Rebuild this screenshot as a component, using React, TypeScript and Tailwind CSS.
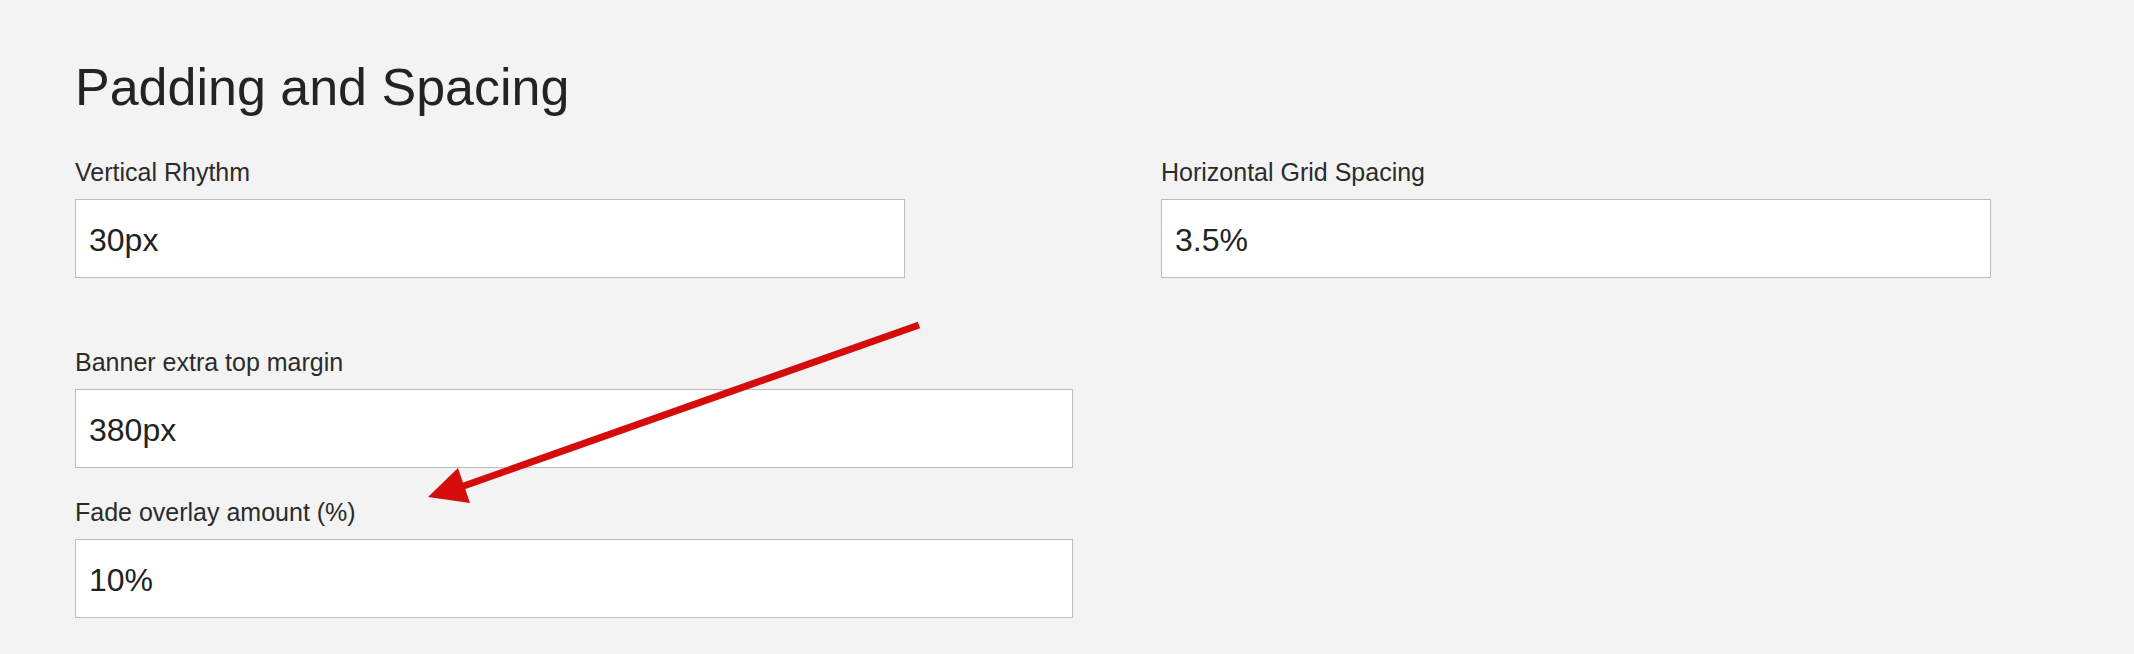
import React from 'react'

// ─── Field ────────────────────────────────────────────────────────────────────

interface FieldProps {
  label: string
  value: string
  width: string
}

function Field({ label, value, width }: FieldProps) {
  return (
    <div className={width}>
      <div className="text-[25px] leading-[25px] text-[#2b2b2b] mb-[14px] whitespace-nowrap">
        {label}
      </div>
      <div className="h-[79px] bg-white border border-[#bcbcbc] flex items-center pl-[13px] pt-[2px] text-[32px] text-[#222]">
        {value}
      </div>
    </div>
  )
}

// ─── Annotation arrow ─────────────────────────────────────────────────────────

function Arrow() {
  return (
    <svg
      className="absolute inset-0 pointer-events-none"
      width="2134"
      height="654"
      viewBox="0 0 2134 654"
    >
      <line x1="919" y1="325" x2="458" y2="488" stroke="#d50c0c" strokeWidth="7" />
      <polygon points="428,497 458,468 470,503" fill="#d50c0c" />
    </svg>
  )
}

// ─── Page ─────────────────────────────────────────────────────────────────────

export default function App() {
  return (
    <div
      className="relative w-[2134px] h-[654px] overflow-hidden bg-[#f3f3f3] pl-[75px] pt-[61px]"
      style={{ fontFamily: '"Liberation Sans", Arial, sans-serif' }}
    >
      <h1 className="text-[52px] leading-[52px] text-[#232323] font-normal">
        Padding and Spacing
      </h1>

      <div className="flex gap-[256px] mt-[47px]">
        <Field label="Vertical Rhythm" value="30px" width="w-[830px]" />
        <Field label="Horizontal Grid Spacing" value="3.5%" width="w-[830px]" />
      </div>

      <div className="mt-[72px]">
        <Field label="Banner extra top margin" value="380px" width="w-[998px]" />
      </div>

      <div className="mt-[32px]">
        <Field label="Fade overlay amount (%)" value="10%" width="w-[998px]" />
      </div>

      <Arrow />
    </div>
  )
}
